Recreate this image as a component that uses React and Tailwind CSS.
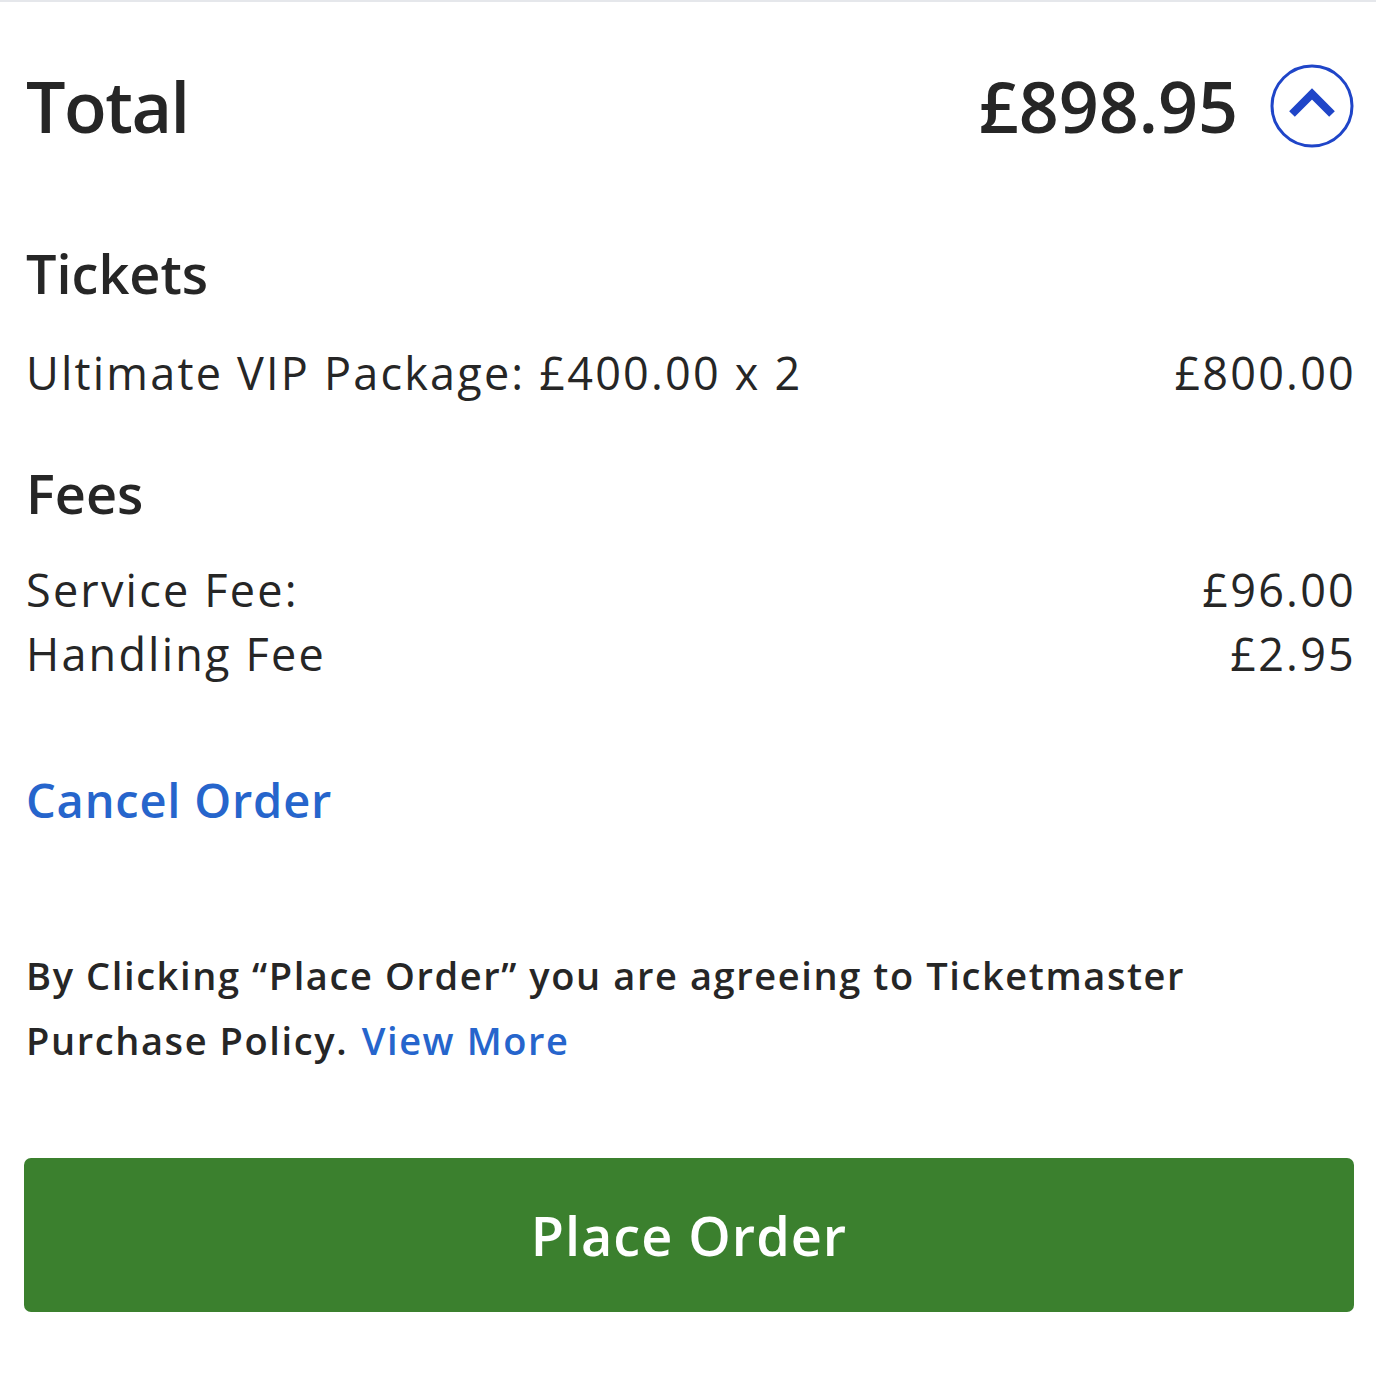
import React from 'react';

const ChevronUp = () => (
  <svg viewBox="0 0 84 84" className="w-[84px] h-[84px]">
    <circle cx="42" cy="42" r="40" fill="none" stroke="#1f45c8" strokeWidth="3" />
    <path d="M22 50 L42 30 L62 50" fill="none" stroke="#1f45c8" strokeWidth="8" />
  </svg>
);

const Row = ({ label, value }) => (
  <div className="flex justify-between items-baseline">
    <span>{label}</span>
    <span className="-mr-[2px]">{value}</span>
  </div>
);

const App = () => {
  return (
    <div
      className="w-[1376px] h-[1376px] bg-white border-t-2 border-gray-200 text-[#262626] overflow-hidden"
      style={{ fontFamily: '"Open Sans", "Noto Sans", sans-serif', fontVariantLigatures: 'none' }}
    >
      <div className="px-[26px] pr-[22px]">
        {/* Total */}
        <div className="flex justify-between items-center pt-[60px] h-[148px]">
          <h1 className="text-[70px] font-semibold leading-none tracking-[-1.5px]">Total</h1>
          <div className="flex items-center gap-[32px]">
            <span className="text-[70px] font-semibold leading-none">£898.95</span>
            <ChevronUp />
          </div>
        </div>

        {/* Tickets */}
        <div className="mt-[96px]">
          <h2 className="text-[54px] font-semibold leading-none">Tickets</h2>
          <div className="mt-[41px] text-[45px] leading-[64px] tracking-[2.2px]">
            <Row label="Ultimate VIP Package: £400.00 x 2" value="£800.00" />
          </div>
        </div>

        {/* Fees */}
        <div className="mt-[61px]">
          <h2 className="text-[54px] font-semibold leading-none">Fees</h2>
          <div className="mt-[38px] text-[45px] leading-[64px] tracking-[2.2px]">
            <Row label="Service Fee:" value="£96.00" />
            <Row label="Handling Fee" value="£2.95" />
          </div>
        </div>

        {/* Cancel */}
        <div className="mt-[91px]">
          <a href="#" className="text-[47px] font-semibold text-[#2665cc] leading-none tracking-[0.8px]">
            Cancel Order
          </a>
        </div>

        {/* Policy */}
        <p className="mt-[119px] text-[38px] font-semibold leading-[65px] tracking-[1.6px]">
          By Clicking “Place Order” you are agreeing to Ticketmaster
          <br />
          Purchase Policy. <a href="#" className="text-[#2665cc] ml-[2px]">View More</a>
        </p>

        {/* Button */}
        <button className="mt-[85px] w-[1330px] -ml-[2px] h-[154px] bg-[#3b802e] rounded-[7px] text-white text-[54px] font-semibold tracking-[1px]">
          Place Order
        </button>
      </div>
    </div>
  );
};

export default App;
